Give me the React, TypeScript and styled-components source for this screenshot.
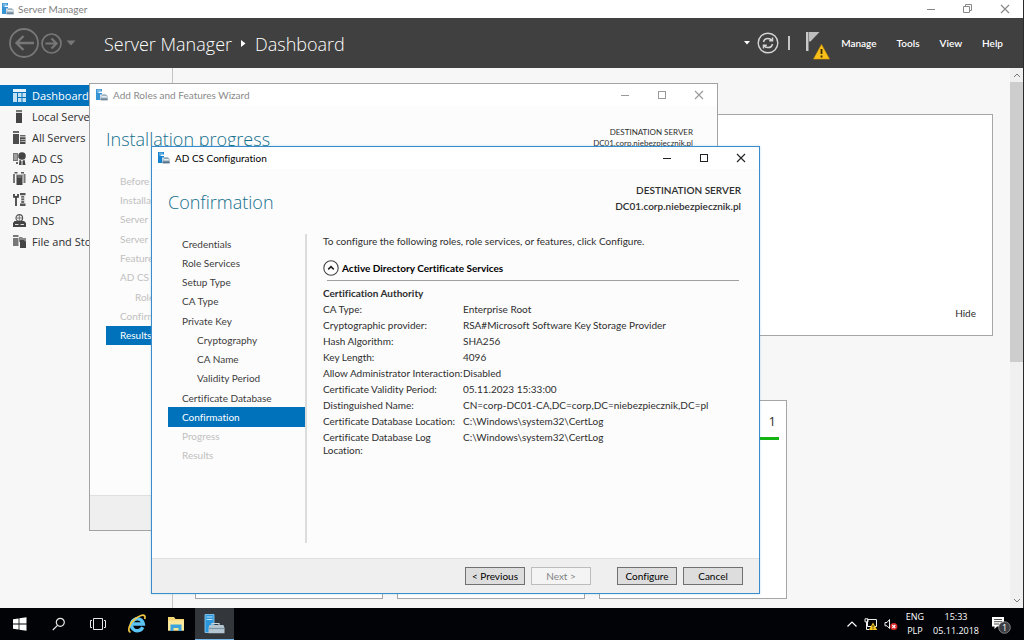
import React from "react";
import styled, { createGlobalStyle, css } from "styled-components";

const GlobalStyle = createGlobalStyle`
  *, *::before, *::after { box-sizing: border-box; }
  body {
    margin: 0;
    font-family: Lato, "Open Sans", sans-serif;
    font-size: 10px;
    font-variant-ligatures: none;
    color: #2e2e2e;
    background: #f7f7f7;
    overflow: hidden;
  }
  button {
    font: inherit;
    color: inherit;
    background: none;
    border: 0;
    padding: 0;
    display: inline-flex;
    align-items: center;
    justify-content: center;
  }
  h1, h2, h3, p, ul { margin: 0; padding: 0; font-weight: inherit; }
  ul { list-style: none; }
  a { color: inherit; text-decoration: none; }
  svg { display: block; flex: none; }
`;

const BLUE = "#0072bc";
const HUMANIST = `"Open Sans", "Noto Sans", sans-serif`;

const Desktop = styled.div`
  position: relative;
  display: flex;
  flex-direction: column;
  height: 100vh;
`;

const AppWindow = styled.div`
  flex: 1;
  min-height: 0;
  display: flex;
  flex-direction: column;
  border-right: 1px solid #2a2a2a;
`;

const MainTitleBar = styled.div`
  display: flex;
  align-items: center;
  height: 18px;
  padding: 0 12px 0 2px;
  gap: 4px;
  background: #fff;
  color: #808080;
`;

const CaptionButtons = styled.div<{ $gap: number }>`
  display: flex;
  gap: ${(p) => p.$gap}px;
  margin-left: auto;
`;

const Header = styled.header`
  display: flex;
  align-items: center;
  height: 50px;
  padding: 0 20px 0 9px;
  background: #404040;
  color: #fff;
`;

const NavButtons = styled.div`
  display: flex;
  align-items: center;
  gap: 2px;
  width: 95px;
`;

const Breadcrumb = styled.h1`
  display: flex;
  align-items: center;
  gap: 9px;
  font-family: ${HUMANIST};
  font-size: 18px;
  font-weight: 300;
  line-height: 24px;
  padding-top: 2px;
  color: #fff;
`;

const HeaderTools = styled.div`
  display: flex;
  align-items: center;
  gap: 7px;
  margin-left: auto;
`;

const ToolDivider = styled.span`
  width: 2px;
  height: 14px;
  margin: 0 8px 0 2px;
  background: #c4c4c4;
`;

const HeaderMenu = styled.nav`
  display: flex;
  gap: 20px;
  margin-left: 3px;
  font-weight: 600;
`;

const Body = styled.div`
  flex: 1;
  min-height: 0;
  display: flex;
  background: #f7f7f7;
`;

const Sidebar = styled.nav`
  width: 173px;
  padding-top: 17px;
  border-right: 1px solid #c4c4c4;
`;

const SidebarList = styled.ul`
  display: grid;
  grid-auto-rows: 1fr;
  height: 167px;
`;

const SidebarLink = styled.a<{ $active?: boolean }>`
  display: flex;
  align-items: center;
  gap: 6px;
  height: 100%;
  padding-left: 12px;
  font-family: ${HUMANIST};
  font-size: 11px;
  white-space: nowrap;
  color: ${(p) => (p.$active ? "#fff" : "#2e2e2e")};
  background: ${(p) => (p.$active ? BLUE : "transparent")};
`;

const Main = styled.main`
  flex: 1;
  min-width: 0;
  padding: 46px 17px 0 22px;
  overflow: hidden;
`;

const WelcomePanel = styled.section`
  display: flex;
  align-items: flex-end;
  justify-content: flex-end;
  height: 222px;
  padding: 16px;
  margin-bottom: 64px;
  border: 1px solid #a6a6a6;
  background: #fff;
`;

const Tiles = styled.section`
  display: flex;
  gap: 14px;
`;

const Tile = styled.article`
  width: 188px;
  height: 199px;
  padding: 11px 7px;
  border: 1px solid #a6a6a6;
  background: #fff;
`;

const TileCount = styled.div`
  padding: 0 3px 7px 0;
  border-bottom: 3px solid #13b313;
  font-family: ${HUMANIST};
  font-size: 13px;
  line-height: 18px;
  text-align: right;
`;

const ScrollTrack = styled.div`
  display: flex;
  flex-direction: column;
  align-items: stretch;
  width: 13px;
  background: #f0f0f0;
`;

const ScrollArrow = styled.button`
  height: 14px;
`;

const ScrollThumb = styled.div`
  height: 280px;
  margin-bottom: auto;
  background: #cdcdcd;
`;

const Wizard = styled.section<{ $active?: boolean }>`
  position: absolute;
  display: flex;
  flex-direction: column;
  background: #fcfcfc;
  ${(p) =>
    p.$active
      ? css`
          left: 151px;
          top: 146px;
          width: 609px;
          height: 448px;
          border: 1px solid #3c8ccb;
          box-shadow: 0 0 2px rgba(60, 160, 220, 0.35);
        `
      : css`
          left: 89px;
          top: 83px;
          width: 629px;
          height: 448px;
          border: 1px solid #a3a3a3;
        `}
`;

const WizardTitleBar = styled.div<{ $active?: boolean }>`
  display: flex;
  align-items: center;
  gap: 5px;
  height: 22px;
  flex: none;
  padding: 0 12px 0 6px;
  background: #fff;
  color: ${(p) => (p.$active ? "#000" : "#8a8a8a")};
`;

const WizardHeader = styled.header`
  display: flex;
  justify-content: space-between;
  height: 65px;
  flex: none;
  padding: 13px 18px 0 16px;
`;

const WizardHeading = styled.h2`
  font-family: ${HUMANIST};
  font-size: 18px;
  line-height: 40px;
  font-weight: 300;
  color: #136f8c;
`;

const Destination = styled.p<{ $active?: boolean }>`
  text-align: right;
  ${(p) =>
    p.$active
      ? css`
          font-size: 10px;
          line-height: 16px;
          font-weight: 600;
        `
      : css`
          font-size: 8px;
          line-height: 11px;
          padding: 8px 6px 0 0;
        `}
`;

const WizardBody = styled.div`
  flex: 1;
  min-height: 0;
  display: flex;
  padding: 0 20px 15px 16px;
`;

const StepsColumn = styled.nav`
  width: 139px;
  border-right: 2px solid #dcdcdc;
`;

const StepsList = styled.ul<{ $height: number }>`
  display: grid;
  grid-auto-rows: 1fr;
  height: ${(p) => p.$height}px;
`;

type StepState = "normal" | "disabled" | "current";

const StepLink = styled.a<{ $state: StepState; $nested?: boolean }>`
  display: flex;
  align-items: center;
  height: 100%;
  padding-left: ${(p) => (p.$nested ? 29 : 14)}px;
  white-space: nowrap;
  color: ${(p) => ({ normal: "#3c3c3c", disabled: "#c0c0c0", current: "#fff" })[p.$state]};
  background: ${(p) => (p.$state === "current" ? BLUE : "transparent")};
`;

const Details = styled.div`
  flex: 1;
  min-width: 0;
  padding-left: 16px;
`;

const Intro = styled.p`
  line-height: 14px;
`;

const GroupHeader = styled.h3`
  display: flex;
  align-items: center;
  gap: 3px;
  height: 32px;
  margin-top: 4px;
  font-size: 10px;
  font-weight: 700;
  color: #000;
`;

const GroupRule = styled.hr`
  margin: -4px 0 5px 4px;
  border: 0;
  border-top: 1px solid #a0a0a0;
`;

const Settings = styled.table`
  border-collapse: collapse;
  line-height: 13px;
  caption {
    padding-bottom: 2px;
    font-weight: 700;
    text-align: left;
    line-height: 14px;
  }
  th,
  td {
    padding: 1px 0 2px;
    font-weight: 400;
    text-align: left;
    vertical-align: top;
  }
  th {
    width: 140px;
  }
`;

const WizardFooter = styled.footer`
  display: flex;
  align-items: center;
  justify-content: flex-end;
  gap: 6px;
  height: 35px;
  flex: none;
  padding: 0 16px;
  border-top: 1px solid #dfdfdf;
  background: #efefef;
`;

const WizardButton = styled.button<{ $spaced?: boolean }>`
  width: 60px;
  height: 18px;
  margin-left: ${(p) => (p.$spaced ? 20 : 0)}px;
  border: 1px solid #707070;
  background: #dddddd;
  color: #000;
  &:disabled {
    border-color: #bcbcbc;
    background: #f4f4f4;
    color: #838383;
  }
`;

const Taskbar = styled.footer`
  display: flex;
  height: 32px;
  flex: none;
  background: #010307;
  color: #fff;
`;

const TaskButton = styled.button<{ $active?: boolean }>`
  width: 39px;
  height: 32px;
  ${(p) =>
    p.$active &&
    css`
      background: #33363b;
      border-bottom: 1px solid #76b9ed;
    `}
`;

const Tray = styled.div`
  display: flex;
  align-items: center;
  margin-left: auto;
  padding-right: 12px;
  gap: 6px;
  font-family: ${HUMANIST};
  font-size: 9px;
  line-height: 14px;
  text-align: center;
`;

const TrayText = styled.div`
  margin: 0 1px 0 2px;
`;

const ServerManagerIcon = ({ size = 12, faded = false }: { size?: number; faded?: boolean }) => (
  <svg width={size} height={size} viewBox="0 0 12 12" opacity={faded ? 0.85 : 1} aria-hidden="true">
    <path d="M0 0h6v2.4H2.6V4H6v1.6H4.2V11H0z" fill="#1583cf" />
    <path d="M1 1.2h4M1 3h1.600" stroke="#bfe0f5" strokeWidth=".7" />
    <path d="M5 7.2 6.3 5.2h3.5L11.6 7v4.2H4.6V7.2z" fill="#8fa6b5" />
    <path d="M5.4 7h5.400v1.500H5.400z" fill="#e3edf3" />
    <path d="M4.600 9.500h7v1.800h-7z" fill="#58748a" />
  </svg>
);

const Minimize = ({ color }: { color: string }) => (
  <svg width="12" height="12" viewBox="0 0 12 12" aria-hidden="true">
    <path d="M2 6.5h8" stroke={color} />
  </svg>
);
const Maximize = ({ color }: { color: string }) => (
  <svg width="12" height="12" viewBox="0 0 12 12" aria-hidden="true">
    <rect x="2.5" y="2.5" width="7" height="7" fill="none" stroke={color} />
  </svg>
);
const Restore = ({ color }: { color: string }) => (
  <svg width="12" height="12" viewBox="0 0 12 12" aria-hidden="true">
    <path d="M1.500 3.500h6v6h-6zM3.500 3.500v-2h6v6h-2" fill="none" stroke={color} />
  </svg>
);
const Close = ({ color }: { color: string }) => (
  <svg width="12" height="12" viewBox="0 0 12 12" aria-hidden="true">
    <path d="m2 2 8 8m0-8-8 8" stroke={color} strokeWidth="1.1" />
  </svg>
);

function Captions({ color, gap, restore }: { color: string; gap: number; restore?: boolean }) {
  return (
    <CaptionButtons $gap={gap}>
      <button aria-label="Minimize"><Minimize color={color} /></button>
      <button aria-label="Maximize">{restore ? <Restore color={color} /> : <Maximize color={color} />}</button>
      <button aria-label="Close"><Close color={color} /></button>
    </CaptionButtons>
  );
}

const sideIcons: Record<string, React.ReactNode> = {
  dashboard: (
    <>
      <path d="M1 0h13v3H1z" fill="#e7f3fb" />
      <path d="M1 4h4v9H1zM6 4h3.500v4H6zM6 9h3.500v4H6zM10.500 4H14v4h-3.500zM10.500 9H14v4h-3.500z" fill="#c4e1f4" />
    </>
  ),
  local: (
    <>
      <path d="M4 0h6v2.200H4z" fill="#777" />
      <path d="M4 3h6v10H4z" fill="#444" />
    </>
  ),
  all: (
    <>
      <path d="M1 0h6v2H1zM8 4h5.500v1.500H8z" fill="#666" />
      <path d="M1 3h6v10H1zM8 6.300h5.500V13H8z" fill="#4c4c4c" />
      <path d="M8.500 8.500h5M8.500 10.500h5" stroke="#ddd" strokeWidth=".7" />
    </>
  ),
  cs: (
    <>
      <path d="M1 1h5v8H1z" fill="#777" />
      <path d="M2 3h3M2 5h3M2 7h3" stroke="#ddd" strokeWidth=".8" />
      <circle cx="10" cy="4" r="3.800" fill="#444" />
      <path d="M7.500 7.500 9.500 9v4H7zM10.500 9l2-1.500 1 5.500h-3z" fill="#444" />
      <path d="M4 10h2v2H4z" fill="#666" />
    </>
  ),
  ds: (
    <>
      <path d="M1 2h2v9H1zM11.500 2h2v9h-2z" fill="#777" />
      <path d="M2.500 0h3v1.500h-3zM9 0h3v1.500H9z" fill="#555" />
      <path d="M4.500 3h6v10h-6z" fill="#444" />
      <path d="M4 3h7M5.500 5h4" stroke="#999" />
    </>
  ),
  dhcp: (
    <>
      <path d="M2 1v2.800h4V1M4 4v9" stroke="#444" strokeWidth="1.800" fill="none" />
      <path d="M8 0h5.500v2.200H8zM8 10.500h5.500V13H8z" fill="#555" />
      <path d="M9.200 3h3v7h-3z" fill="#666" />
      <path d="M9.200 5h3M9.200 7.500h3" stroke="#eee" strokeWidth=".7" />
    </>
  ),
  dns: (
    <>
      <circle cx="7.300" cy="4" r="3.300" fill="none" stroke="#555" strokeWidth="1.200" />
      <path d="M4.500 4h5.600M7.300 1v6" stroke="#777" />
      <path d="M2.500 7h9.600L14 9v4H1V9z" fill="#444" />
      <path d="M3 10.500h3.500M8.500 10.500H12" stroke="#ddd" />
    </>
  ),
  file: (
    <>
      <path d="M1 0h5.500v2H1z" fill="#777" />
      <path d="M1 3h5.500v8H1z" fill="#777" />
      <path d="M7 2h3l1 1h3v4H7z" fill="#888" />
      <path d="M8 5h3.500L14 7v6H8z" fill="#444" />
    </>
  ),
};

const sideItems = [
  ["dashboard", "Dashboard"],
  ["local", "Local Server"],
  ["all", "All Servers"],
  ["cs", "AD CS"],
  ["ds", "AD DS"],
  ["dhcp", "DHCP"],
  ["dns", "DNS"],
  ["file", "File and Storage Services"],
];

type Step = { label: string; state?: StepState; nested?: boolean };

const installSteps: Step[] = [
  { label: "Before You Begin", state: "disabled" },
  { label: "Installation Type", state: "disabled" },
  { label: "Server Selection", state: "disabled" },
  { label: "Server Roles", state: "disabled" },
  { label: "Features", state: "disabled" },
  { label: "AD CS", state: "disabled" },
  { label: "Role Services", state: "disabled", nested: true },
  { label: "Confirmation", state: "disabled" },
  { label: "Results", state: "current" },
];

const configSteps: Step[] = [
  { label: "Credentials" },
  { label: "Role Services" },
  { label: "Setup Type" },
  { label: "CA Type" },
  { label: "Private Key" },
  { label: "Cryptography", nested: true },
  { label: "CA Name", nested: true },
  { label: "Validity Period", nested: true },
  { label: "Certificate Database" },
  { label: "Confirmation", state: "current" },
  { label: "Progress", state: "disabled" },
  { label: "Results", state: "disabled" },
];

const settings = [
  ["CA Type:", "Enterprise Root"],
  ["Cryptographic provider:", "RSA#Microsoft Software Key Storage Provider"],
  ["Hash Algorithm:", "SHA256"],
  ["Key Length:", "4096"],
  ["Allow Administrator Interaction:", "Disabled"],
  ["Certificate Validity Period:", "05.11.2023 15:33:00"],
  ["Distinguished Name:", "CN=corp-DC01-CA,DC=corp,DC=niebezpiecznik,DC=pl"],
  ["Certificate Database Location:", "C:\\Windows\\system32\\CertLog"],
  ["Certificate Database Log Location:", "C:\\Windows\\system32\\CertLog"],
];

function Steps({ items, height }: { items: Step[]; height: number }) {
  return (
    <StepsColumn aria-label="Wizard steps">
      <StepsList $height={height}>
        {items.map((s) => (
          <li key={s.label}>
            <StepLink href="#" $state={s.state ?? "normal"} $nested={s.nested}>
              {s.label}
            </StepLink>
          </li>
        ))}
      </StepsList>
    </StepsColumn>
  );
}

function InstallWizard() {
  return (
    <Wizard aria-label="Add Roles and Features Wizard">
      <WizardTitleBar>
        <ServerManagerIcon faded />
        Add Roles and Features Wizard
        <Captions color="#999" gap={25} />
      </WizardTitleBar>
      <WizardHeader>
        <WizardHeading>Installation progress</WizardHeading>
        <Destination>
          DESTINATION SERVER
          <br />
          DC01.corp.niebezpiecznik.pl
        </Destination>
      </WizardHeader>
      <WizardBody>
        <Steps items={installSteps} height={174} />
      </WizardBody>
      <WizardFooter />
    </Wizard>
  );
}

function ConfigWizard() {
  return (
    <Wizard $active aria-label="AD CS Configuration">
      <WizardTitleBar $active>
        <ServerManagerIcon />
        AD CS Configuration
        <Captions color="#222" gap={25} />
      </WizardTitleBar>
      <WizardHeader>
        <WizardHeading>Confirmation</WizardHeading>
        <Destination $active>
          DESTINATION SERVER
          <br />
          DC01.corp.niebezpiecznik.pl
        </Destination>
      </WizardHeader>
      <WizardBody>
        <Steps items={configSteps} height={231} />
        <Details>
          <Intro>To configure the following roles, role services, or features, click Configure.</Intro>
          <GroupHeader>
            <button aria-label="Collapse">
              <svg width="16" height="16" viewBox="0 0 16 16" aria-hidden="true">
                <circle cx="8" cy="8" r="7.200" fill="#fff" stroke="#444" strokeWidth="1.100" />
                <path d="m5.200 9.300 2.800-2.600 2.800 2.600" fill="none" stroke="#222" strokeWidth="1.600" />
              </svg>
            </button>
            Active Directory Certificate Services
          </GroupHeader>
          <GroupRule />
          <Settings>
            <caption>Certification Authority</caption>
            <tbody>
              {settings.map(([k, v]) => (
                <tr key={k}>
                  <th scope="row">{k}</th>
                  <td>{v}</td>
                </tr>
              ))}
            </tbody>
          </Settings>
        </Details>
      </WizardBody>
      <WizardFooter>
        <WizardButton>&lt; Previous</WizardButton>
        <WizardButton disabled>Next &gt;</WizardButton>
        <WizardButton $spaced>Configure</WizardButton>
        <WizardButton>Cancel</WizardButton>
      </WizardFooter>
    </Wizard>
  );
}

export default function App() {
  return (
    <Desktop>
      <GlobalStyle />
      <AppWindow>
        <MainTitleBar>
          <ServerManagerIcon faded />
          Server Manager
          <Captions color="#888" gap={25} restore />
        </MainTitleBar>
        <Header>
          <NavButtons>
            <button aria-label="Back">
              <svg width="30" height="30" viewBox="0 0 30 30" fill="none" stroke="#777" aria-hidden="true">
                <circle cx="15" cy="15" r="14" strokeWidth="1.800" />
                <path d="M25 15H8M14.500 8 7.500 15l7 7" strokeWidth="2.400" />
              </svg>
            </button>
            <button aria-label="Forward">
              <svg width="21" height="21" viewBox="0 0 21 21" fill="none" stroke="#777" aria-hidden="true">
                <circle cx="10.500" cy="10.500" r="9.500" strokeWidth="1.700" />
                <path d="M4.500 10.500H15M10.500 5.500l5 5-5 5" strokeWidth="2.200" />
              </svg>
            </button>
            <button aria-label="History">
              <svg width="14" height="6" viewBox="0 0 14 6" aria-hidden="true">
                <path d="M2.500.5h9L7 5.500z" fill="#777" />
              </svg>
            </button>
          </NavButtons>
          <Breadcrumb>
            <span>Server Manager</span>
            <svg width="5" height="8" viewBox="0 0 5 8" aria-hidden="true">
              <path d="M0 0v7l4.500-3.500z" fill="#fff" />
            </svg>
            <span>Dashboard</span>
          </Breadcrumb>
          <HeaderTools>
            <button aria-label="Refresh options">
              <svg width="6" height="4" viewBox="0 0 6 4" aria-hidden="true">
                <path d="M0 0h6L3 3.500z" fill="#fff" />
              </svg>
            </button>
            <button aria-label="Refresh">
              <svg width="22" height="22" viewBox="0 0 22 22" fill="none" stroke="#d4d4d4" aria-hidden="true">
                <circle cx="11" cy="11" r="9.800" strokeWidth="1.400" />
                <path d="M6.500 10c.5-2.400 2.300-3.600 4.500-3.600 1.600 0 2.800.7 3.700 1.900M15.500 5.500v3.300h-3.300M15.500 12c-.5 2.400-2.300 3.600-4.500 3.600-1.600 0-2.800-.7-3.700-1.900M6.500 16.500v-3.300h3.300" strokeWidth="1.500" />
              </svg>
            </button>
            <ToolDivider />
            <button aria-label="Notifications">
              <svg width="26" height="34" viewBox="0 -4 26 34" aria-hidden="true">
                <path d="M1 2h2.500v19H1z" fill="#c9c9c9" />
                <path d="M4 2h10.500L5.500 11.500H4z" fill="#bdbdbd" />
                <path d="M16.500 14.500 24.500 29h-16z" fill="#f9bf1a" stroke="#d99a00" strokeWidth=".6" strokeLinejoin="round" />
                <path d="M16.500 19v5M16.500 25.500v2" stroke="#3a2a00" strokeWidth="1.800" />
              </svg>
            </button>
            <HeaderMenu aria-label="Main menu">
              <button>Manage</button>
              <button>Tools</button>
              <button>View</button>
              <button>Help</button>
            </HeaderMenu>
          </HeaderTools>
        </Header>
        <Body>
          <Sidebar aria-label="Servers">
            <SidebarList>
              {sideItems.map(([icon, label]) => (
                <li key={icon}>
                  <SidebarLink href="#" $active={icon === "dashboard"}>
                    <svg width="14" height="13" viewBox="0 0 14 13" aria-hidden="true">{sideIcons[icon]}</svg>
                    {label}
                  </SidebarLink>
                </li>
              ))}
            </SidebarList>
          </Sidebar>
          <Main>
            <WelcomePanel>
              <button>Hide</button>
            </WelcomePanel>
            <Tiles>
              <Tile />
              <Tile />
              <Tile>
                <TileCount>1</TileCount>
              </Tile>
            </Tiles>
          </Main>
          <ScrollTrack>
            <ScrollArrow aria-label="Scroll up">
              <svg width="8" height="6" viewBox="0 0 8 6" aria-hidden="true">
                <path d="m1 5 3-3 3 3" fill="none" stroke="#777" />
              </svg>
            </ScrollArrow>
            <ScrollThumb />
            <ScrollArrow aria-label="Scroll down">
              <svg width="8" height="6" viewBox="0 0 8 6" aria-hidden="true">
                <path d="m1 1 3 3 3-3" fill="none" stroke="#777" />
              </svg>
            </ScrollArrow>
          </ScrollTrack>
        </Body>
      </AppWindow>
      <InstallWizard />
      <ConfigWizard />
      <Taskbar>
        <TaskButton aria-label="Start">
          <svg width="14" height="14" viewBox="0 0 14 14" fill="#fff" aria-hidden="true">
            <path d="M0 2.200 5.600 1.400v5.200H0zM6.400 1.300 13.500.3v6.300H6.400zM0 7.400h5.600v5.200L0 11.800zM6.400 7.400h7.100v6.300l-7.100-1z" />
          </svg>
        </TaskButton>
        <TaskButton aria-label="Search">
          <svg width="14" height="14" viewBox="0 0 14 14" fill="none" stroke="#e8e8e8" strokeWidth="1.200" aria-hidden="true">
            <circle cx="8.300" cy="5.300" r="4" />
            <path d="M5.500 8.300.8 13" />
          </svg>
        </TaskButton>
        <TaskButton aria-label="Task view">
          <svg width="16" height="12" viewBox="0 0 16 12" fill="none" stroke="#e8e8e8" aria-hidden="true">
            <path d="M3.500.5h9v11h-9zM2 2.500H.5v7H2M14 2.500h1.500v7H14" />
          </svg>
        </TaskButton>
        <TaskButton aria-label="Internet Explorer">
          <svg width="20" height="20" viewBox="0 0 20 20" fill="none" aria-hidden="true">
            <path d="M15.800 13.300a6 6 0 1 1 .5-3.300H5.500" stroke="#5cc4f5" strokeWidth="3.400" />
            <path d="M3.500 18.200C-.2 17.500 2.500 9 8.500 4.500 12.500 1.500 16.500.3 17.700 2c.5.8.3 2-.2 3" stroke="#f2c744" strokeWidth="1.700" />
          </svg>
        </TaskButton>
        <TaskButton aria-label="File Explorer">
          <svg width="18" height="16" viewBox="0 0 18 16" aria-hidden="true">
            <path d="M1 1h6l1.500 2H17v11.500H1z" fill="#f7d774" />
            <path d="M1 4.500h16v10H1z" fill="#fbe79c" />
            <path d="M3.500 15V8.500h11V15h-3v-3h-5v3z" fill="#3aa3d9" />
          </svg>
        </TaskButton>
        <TaskButton $active aria-label="Server Manager">
          <svg width="21" height="20" viewBox="0 0 21 20" aria-hidden="true">
            <path d="M1 .5h9v18H1z" fill="#2b95dc" stroke="#8fd0f7" strokeWidth=".8" />
            <path d="M2.500 3h6M2.500 5.500h6" stroke="#bfe4fa" />
            <path d="M8 11V9.500h7V11" fill="none" stroke="#c8d6df" strokeWidth="1.200" />
            <path d="M5.500 11h14l1 3v5.300h-16V14z" fill="#b4c6d2" />
            <path d="M5 14.500h15" stroke="#7f95a4" strokeWidth="1.200" />
          </svg>
        </TaskButton>
        <Tray>
          <button aria-label="Show hidden icons">
            <svg width="12" height="8" viewBox="0 0 12 8" fill="none" stroke="#fff" strokeWidth="1.200" aria-hidden="true">
              <path d="m1.500 6.500 4.500-4.500 4.500 4.500" />
            </svg>
          </button>
          <button aria-label="Network">
            <svg width="14" height="13" viewBox="0 0 14 13" aria-hidden="true">
              <path d="M3.500 1.500h9v7h-9zM1 .8h3v3H1zM2.500 4v7.500H5" fill="#010307" stroke="#eee" />
              <path d="M9 4.500 13.200 12H4.800z" fill="#f7c51e" />
              <path d="M9 7v2.500M9 10.300v1" stroke="#222" />
            </svg>
          </button>
          <button aria-label="Volume muted">
            <svg width="14" height="13" viewBox="0 0 14 13" aria-hidden="true">
              <path d="M1 4.500h2L5.500 1.500v9L3 7.800H1z" fill="none" stroke="#eee" />
              <circle cx="9.800" cy="8.500" r="3.600" fill="#d92a2a" />
              <path d="m8.300 7 3 3m0-3-3 3" stroke="#fff" strokeWidth="1.100" />
            </svg>
          </button>
          <TrayText>
            ENG
            <br />
            PLP
          </TrayText>
          <TrayText>
            15:33
            <br />
            05.11.2018
          </TrayText>
          <button aria-label="Action center, 1 notification">
            <svg width="26" height="20" viewBox="0 0 26 20" aria-hidden="true">
              <path d="M6 3h12v9.500h-7L8.500 15v-2.500H6z" fill="#fff" />
              <path d="M8 5.500h8M8 7.700h8M8 10h5" stroke="#222" strokeWidth=".8" />
              <circle cx="18.500" cy="13.500" r="5.800" fill="#3b3d42" stroke="#999" strokeWidth=".8" />
              <text x="18.500" y="17" fontSize="9" fill="#fff" textAnchor="middle">1</text>
            </svg>
          </button>
        </Tray>
      </Taskbar>
    </Desktop>
  );
}
